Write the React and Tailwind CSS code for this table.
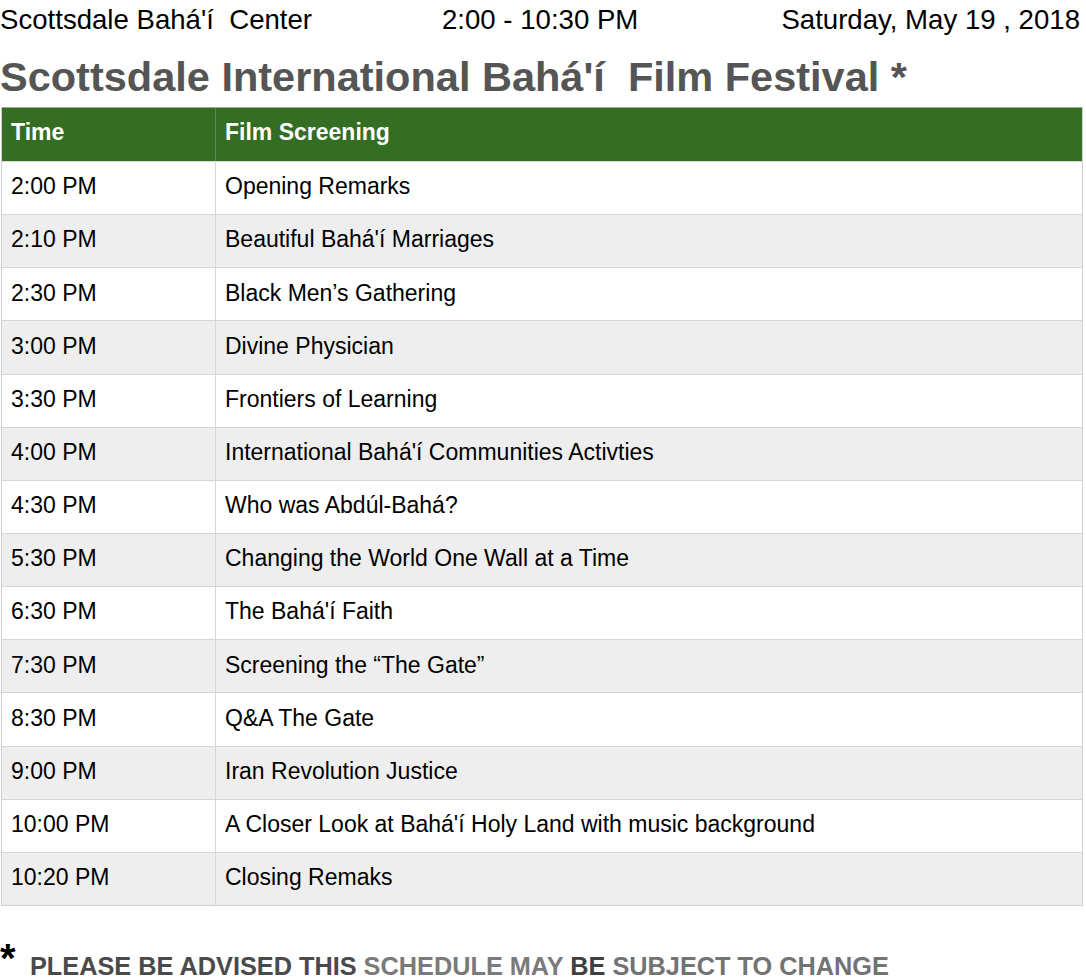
import React from "react";

const schedule = [
  ["2:00 PM", "Opening Remarks"],
  ["2:10 PM", "Beautiful Bahá'í Marriages"],
  ["2:30 PM", "Black Men’s Gathering"],
  ["3:00 PM", "Divine Physician"],
  ["3:30 PM", "Frontiers of Learning"],
  ["4:00 PM", "International Bahá'í Communities Activties"],
  ["4:30 PM", "Who was Abdúl-Bahá?"],
  ["5:30 PM", "Changing the World One Wall at a Time"],
  ["6:30 PM", "The Bahá'í Faith"],
  ["7:30 PM", "Screening the “The Gate”"],
  ["8:30 PM", "Q&A The Gate"],
  ["9:00 PM", "Iran Revolution Justice"],
  ["10:00 PM", "A Closer Look at Bahá'í Holy Land with music background"],
  ["10:20 PM", "Closing Remaks"],
];

const App = () => {
  return (
    <div
      className="w-[1086px] h-[979px] bg-white text-black overflow-hidden"
      style={{ fontFamily: '"Liberation Sans", Arial, sans-serif' }}
    >
      {/* Top info line */}
      <div className="h-[40px] flex items-center text-[27.6px] leading-[40px] pr-[6px]">
        <span className="w-[442px] whitespace-pre">Scottsdale Bahá'í  Center</span>
        <span className="flex-1">2:00 - 10:30 PM</span>
        <span>Saturday, May 19 , 2018</span>
      </div>

      {/* Title */}
      <h1 className="mt-[12px] text-[41.5px] leading-[50px] font-bold text-[#555555] whitespace-pre">
        Scottsdale International Bahá'í  Film Festival *
      </h1>

      {/* Schedule table */}
      <div className="mt-[5px] ml-[1px] w-[1082px] border-x border-b border-[#cfcfcf]">
        <div className="h-[54px] flex bg-[#346e22] text-white font-bold text-[23px] border-t border-[#8fb086]">
          <div className="w-[214px] flex items-center pl-[9px] pb-[4px] border-r border-[#5d8a50]">Time</div>
          <div className="flex-1 flex items-center pl-[9px] pb-[4px]">Film Screening</div>
        </div>
        {schedule.map(([time, film], i) => (
          <div
            key={time}
            className={`h-[53.15px] flex text-[23px] border-t border-[#d6d6d6] ${
              i % 2 === 1 ? "bg-[#eeeeee]" : "bg-white"
            }`}
          >
            <div className="w-[214px] flex items-center pl-[9px] pb-[3px] border-r border-[#d6d6d6]">{time}</div>
            <div className="flex-1 flex items-center pl-[9px] pb-[3px]">{film}</div>
          </div>
        ))}
      </div>

      {/* Footer note */}
      <div className="mt-[35px] flex items-start font-bold">
        <span className="text-[40px] leading-[40px] mt-[-3px] w-[30px]">*</span>
        <span className="text-[25.3px] leading-[40px] mt-[5px]">
          <span className="text-[#4a4a4a]">PLEASE BE ADVISED THIS </span>
          <span className="text-[#7a7a7a]">SCHEDULE MAY </span>
          <span className="text-[#3f3f3f]">BE </span>
          <span className="text-[#737373]">SUBJECT TO CHANGE</span>
        </span>
      </div>
    </div>
  );
};

export default App;
